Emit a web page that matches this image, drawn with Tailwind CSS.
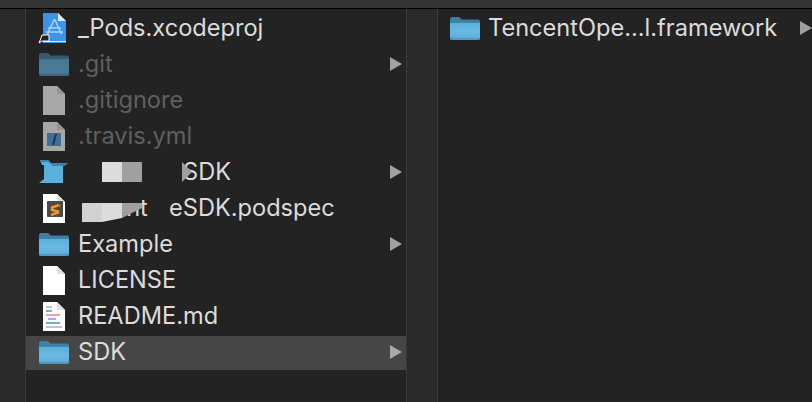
<!DOCTYPE html>
<html lang="en">
  <head>
    <meta charset="UTF-8" />
    <title>Finder</title>
    <script src="https://cdn.jsdelivr.net/npm/@tailwindcss/browser@4"></script>
  </head>
  <body class="bg-[#232323] overflow-hidden">
    <svg width="0" height="0" class="absolute">
      <defs>
        <linearGradient id="blue" x1="0" y1="0" x2="0" y2="1">
          <stop offset="0" stop-color="#5aafdc" />
          <stop offset="0.5" stop-color="#69b9e2" />
          <stop offset="1" stop-color="#5cabd8" />
        </linearGradient>
        <symbol id="folder" viewBox="0 0 30 24">
          <path d="M0 3a2 2 0 0 1 2-2h6.500a2 2 0 0 1 1.600.800L11.500 3.500H28a2 2 0 0 1 2 2V8H0Z" fill="#3f7fa3" />
          <path d="M0 6.500h30V22a2 2 0 0 1-2 2H2a2 2 0 0 1-2-2Z" fill="url(#blue)" />
          <path d="M0 6h30v1H0Z" fill="#3f85ab" />
          <path d="M0 23h30" stroke="#3f85ab" stroke-width="1" />
        </symbol>
        <symbol id="page" viewBox="0 0 22 29">
          <path d="M0 0h14l8 8v21H0Z" fill="#fff" />
          <path d="M14 0l8 8h-8Z" fill="#e2e2e2" />
        </symbol>
      </defs>
    </svg>

    <div class="relative w-[812px] h-[402px] flex flex-col font-['Inter',sans-serif] text-[23.6px] text-[#dcdcdc]">
      <!-- toolbar edge -->
      <div class="h-[8px] bg-[#343434] shrink-0"></div>
      <div class="h-[1px] bg-black shrink-0"></div>

      <div class="flex flex-1 min-h-0">
        <div class="w-[25px] bg-[#2a2a2a] border-r border-[#3a3a3a] box-content shrink-0"></div>

        <!-- first column -->
        <div class="w-[380px] shrink-0 flex flex-col gap-[2px] pt-[3px]">
          <div class="h-[34px] pb-[2px] flex items-center">
            <svg class="w-[32px] h-[32px] ml-[12px] mr-[8px] shrink-0" viewBox="0 0 32 32">
              <path d="M5 1h15l8 8v22H5Z" fill="#3b94ea" />
              <path d="M20 1l8 8h-8Z" fill="#d3e8fa" />
              <path d="M5 29.500h23" stroke="#d5ebfc" stroke-width="1" />
              <path d="M16.500 7l-7 15M16.500 7l7 15M10 16h13M8 20h17" stroke="#a9d4f8" stroke-width="1.500" fill="none" />
              <path d="M1 31l2-5 1-3h7v6H4Z" fill="#222" stroke="#fff" stroke-width="1" />
            </svg>
            <span>_Pods.xcodeproj</span>
          </div>

          <div class="h-[34px] pb-[2px] flex items-center">
            <svg class="w-[30px] h-[24px] ml-[13px] mr-[9px] shrink-0 opacity-60"><use href="#folder" /></svg>
            <span class="flex-1 text-[#5f5f5f]">.git</span>
            <div class="w-0 h-0 border-y-[7px] border-y-transparent border-l-[12px] border-l-[#a0a0a0] mr-[4px]"></div>
          </div>

          <div class="h-[34px] pb-[2px] flex items-center">
            <svg class="w-[22px] h-[29px] ml-[17px] mr-[13px] shrink-0 opacity-60"><use href="#page" /></svg>
            <span class="text-[#5f5f5f]">.gitignore</span>
          </div>

          <div class="h-[34px] pb-[2px] flex items-center">
            <div class="relative ml-[17px] mr-[13px] shrink-0 w-[22px] h-[29px]">
              <svg class="w-[22px] h-[29px] opacity-60"><use href="#page" /></svg>
              <svg class="absolute left-[4px] top-[11px] w-[14px] h-[13px]" viewBox="0 0 14 13">
                <rect width="14" height="13" fill="#3c6f9f" />
                <path d="M9 1L6 12" stroke="#22364d" stroke-width="2" />
              </svg>
            </div>
            <span class="text-[#5f5f5f]">.travis.yml</span>
          </div>

          <div class="h-[34px] pb-[2px] flex items-center">
            <svg class="w-[30px] h-[26px] ml-[13px] mr-[9px] shrink-0" viewBox="0 0 30 26">
              <path d="M1 1h8l3 3h17l-4 3H24v17H0l5-4V6H3Z" fill="#5ab0dc" />
              <path d="M1 1h8l3 3h17l-4 3H14L9 3H3Z" fill="#3f85ab" />
            </svg>
            <span class="flex-1 pl-[105px]">SDK</span>
            <div class="w-0 h-0 border-y-[7px] border-y-transparent border-l-[12px] border-l-[#a0a0a0] mr-[4px]"></div>
          </div>

          <div class="h-[34px] pb-[2px] flex items-center">
            <div class="relative ml-[17px] mr-[13px] shrink-0 w-[22px] h-[29px]">
              <svg class="w-[22px] h-[29px]"><use href="#page" /></svg>
              <svg class="absolute left-[4px] top-[7px] w-[16px] h-[16px]" viewBox="0 0 16 16">
                <rect width="16" height="16" rx="1" fill="#4a4a4a" />
                <path d="M12 4L5 6.500v2.500l6 1.500v1L4 14M12 4v1.500" stroke="#f3931f" stroke-width="2.500" fill="none" />
              </svg>
            </div>
            <span class="w-[73px] pl-[34px] whitespace-nowrap shrink-0">ont</span>
            <span class="pl-[18px]">eSDK.podspec</span>
          </div>

          <div class="h-[34px] pb-[2px] flex items-center">
            <svg class="w-[30px] h-[24px] ml-[13px] mr-[9px] shrink-0"><use href="#folder" /></svg>
            <span class="flex-1">Example</span>
            <div class="w-0 h-0 border-y-[7px] border-y-transparent border-l-[12px] border-l-[#a0a0a0] mr-[4px]"></div>
          </div>

          <div class="h-[34px] pb-[2px] flex items-center">
            <svg class="w-[22px] h-[29px] ml-[17px] mr-[13px] shrink-0"><use href="#page" /></svg>
            <span>LICENSE</span>
          </div>

          <div class="h-[34px] pb-[2px] flex items-center">
            <svg class="w-[22px] h-[29px] ml-[17px] mr-[13px] shrink-0" viewBox="0 0 22 29">
              <use href="#page" />
              <path d="M3 5h6" stroke="#b5b5b5" stroke-width="1.600" />
              <path d="M3 9h6" stroke="#3fa7b5" stroke-width="1.600" />
              <path d="M3 13h14" stroke="#d8929c" stroke-width="1.600" />
              <path d="M5 17h8" stroke="#a884f0" stroke-width="1.600" />
              <path d="M3 21h14" stroke="#3fa7b5" stroke-width="1.600" />
              <path d="M3 25h16" stroke="#b5b5b5" stroke-width="1.600" />
            </svg>
            <span>README.md</span>
          </div>

          <div class="h-[34px] pb-[2px] flex items-center bg-[#464646]">
            <svg class="w-[30px] h-[24px] ml-[13px] mr-[9px] shrink-0"><use href="#folder" /></svg>
            <span class="flex-1">SDK</span>
            <div class="w-0 h-0 border-y-[7px] border-y-transparent border-l-[12px] border-l-[#a8a8a8] mr-[4px]"></div>
          </div>
        </div>

        <div class="w-[30px] bg-[#2a2a2a] border-x border-[#3a3a3a] box-content shrink-0"></div>

        <!-- second column -->
        <div class="flex-1 min-w-0 pt-[3px]">
          <div class="h-[34px] pb-[2px] flex items-center">
            <svg class="w-[30px] h-[24px] ml-[12px] mr-[8px] shrink-0"><use href="#folder" /></svg>
            <span class="flex-1 whitespace-nowrap">TencentOpe...l.framework</span>
            <div class="w-0 h-0 border-y-[7px] border-y-transparent border-l-[12px] border-l-[#a0a0a0]"></div>
          </div>
        </div>
      </div>

      <!-- redaction smudges over the file names -->
      <div class="absolute left-[102px] top-[162px] w-[20px] h-[20px] bg-[#dcdcdc]"></div>
      <div class="absolute left-[122px] top-[162px] w-[20px] h-[20px] bg-[#a0a0a0]"></div>
      <svg class="absolute left-[182px] top-[162px] w-[10px] h-[20px]" viewBox="0 0 10 20">
        <path d="M0 0l10 10L0 20Z" fill="#a0a0a0" />
      </svg>
      <svg class="absolute left-[82px] top-[203px] w-[60px] h-[19px]" viewBox="0 0 60 19">
        <path d="M0 0h20v19H0Z" fill="#d2d2d2" />
        <path d="M20 0h20v15L20 19Z" fill="#dcdcdc" />
        <path d="M40 0h20v5L40 15Z" fill="#a0a0a0" />
      </svg>
    </div>
  </body>
</html>
